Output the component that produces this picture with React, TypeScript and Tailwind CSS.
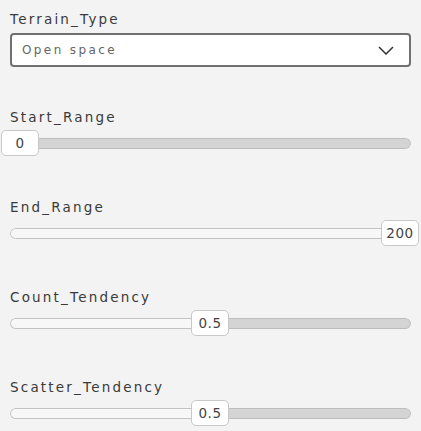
import React from "react";

const font = { fontFamily: '"DejaVu Sans", sans-serif' };

function Slider({ label, value, min, max, text }: { label: string; value: number; min: number; max: number; text: string }) {
  const f = (value - min) / (max - min);
  return (
    <div className="flex flex-col">
      <div className="h-[20px] px-[10px] text-[13.5px] leading-[20px] tracking-[2.2px] text-[#3a3a3a]">{label}</div>
      <div className="relative mx-[10px] mt-[3px] h-[26px]">
        <div className="flex h-full items-center">
          <div className="flex h-[11px] w-full overflow-hidden rounded-full">
            {f > 0 && (
              <div
                className={`h-full border border-[#c2c2c2] bg-[#f7f7f7] ${f < 1 ? "rounded-l-full border-r-0" : "rounded-full"}`}
                style={{ width: `${f * 100}%` }}
              />
            )}
            {f < 1 && (
              <div className={`h-full flex-1 border border-[#bdbdbd] bg-[#d4d4d4] ${f > 0 ? "rounded-r-full border-l-0" : "rounded-full"}`} />
            )}
          </div>
        </div>
        <div
          className="absolute top-0 flex h-[26px] w-[38px] items-center justify-center rounded-[5px] border border-[#c8c8c8] bg-white text-[13.5px] tracking-[0.5px] text-[#444]"
          style={{ left: `${-9 + 380 * f}px` }}
        >
          {text}
        </div>
      </div>
    </div>
  );
}

export default function App() {
  return (
    <div className="h-[431px] w-[421px] bg-[#f3f3f3]" style={font}>
      <div className="flex flex-col pt-[9px]">
        <div className="h-[20px] px-[10px] text-[13.5px] leading-[20px] tracking-[2.2px] text-[#3a3a3a]">Terrain_Type</div>
        <div className="mx-[10px] mt-[4px] flex h-[34px] items-center justify-between rounded-[4px] border-2 border-[#707070] bg-white pl-[10px] pr-[15px]">
          <span className="text-[12px] tracking-[2.4px] text-[#666]">Open space</span>
          <svg width="16" height="9" viewBox="0 0 16 9" fill="none" stroke="#333" strokeWidth="1.5">
            <path d="M1 1 L8 8 L15 1" />
          </svg>
        </div>
        <div className="mt-[40px] flex flex-col gap-[41px]">
          <Slider label="Start_Range" value={0} min={0} max={200} text="0" />
          <Slider label="End_Range" value={200} min={0} max={200} text="200" />
          <Slider label="Count_Tendency" value={0.5} min={0} max={1} text="0.5" />
          <Slider label="Scatter_Tendency" value={0.5} min={0} max={1} text="0.5" />
        </div>
      </div>
    </div>
  );
}
